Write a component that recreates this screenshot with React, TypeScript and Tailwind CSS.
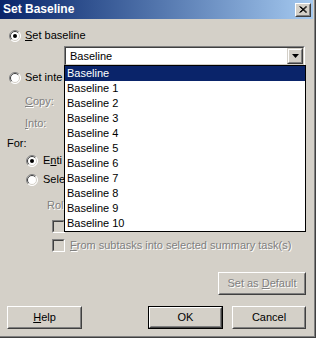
import React from "react";

const Radio = ({ checked }: { checked?: boolean }) => (
  <svg width="12" height="12" viewBox="0 0 12 12" className="shrink-0">
    <circle cx="6" cy="6" r="5.5" fill="#ffffff" />
    <path d="M2.1 9.9 A5.5 5.5 0 0 1 9.9 2.1" stroke="#808080" strokeWidth="1" fill="none" />
    <path d="M9.9 2.1 A5.5 5.5 0 0 1 2.1 9.9" stroke="#ffffff" strokeWidth="1" fill="none" />
    <path d="M2.8 9.2 A4.5 4.5 0 0 1 9.2 2.8" stroke="#404040" strokeWidth="1" fill="none" />
    <path d="M9.2 2.8 A4.5 4.5 0 0 1 2.8 9.2" stroke="#d4d0c8" strokeWidth="1" fill="none" />
    {checked && <circle cx="6" cy="6" r="2" fill="#000000" />}
  </svg>
);

const Check = () => (
  <div className="w-[13px] h-[13px] shrink-0 border border-t-[#808080] border-l-[#808080] border-r-white border-b-white">
    <div className="w-full h-full border border-t-[#404040] border-l-[#404040] border-r-[#d4d0c8] border-b-[#d4d0c8] bg-[#d4d0c8]" />
  </div>
);

const dis = "text-[#808080] [text-shadow:1px_1px_0_#ffffff]";

const Btn = ({
  children,
  w,
  def,
  disabled,
}: {
  children: React.ReactNode;
  w: string;
  def?: boolean;
  disabled?: boolean;
}) => (
  <div className={`${w} h-[23px] ${def ? "border border-black" : ""}`}>
    <div className="w-full h-full border border-t-white border-l-white border-r-[#404040] border-b-[#404040]">
      <div
        className={`w-full h-full border border-t-[#d4d0c8] border-l-[#d4d0c8] border-r-[#808080] border-b-[#808080] flex items-center justify-center ${
          disabled ? dis : "text-black"
        }`}
      >
        {children}
      </div>
    </div>
  </div>
);

const items = [
  "Baseline",
  "Baseline 1",
  "Baseline 2",
  "Baseline 3",
  "Baseline 4",
  "Baseline 5",
  "Baseline 6",
  "Baseline 7",
  "Baseline 8",
  "Baseline 9",
  "Baseline 10",
];

export default function App() {
  return (
    <div className="w-[316px] h-[338px] border-r border-b border-[#404040] font-['Liberation_Sans',Arial,sans-serif] text-[11px] leading-[13px] text-black">
      <div className="w-full h-full border-r border-b border-[#808080] bg-[#d4d0c8] flex flex-col relative">
        {/* Title bar */}
        <div className="h-[19px] mr-[1px] flex items-center justify-between bg-gradient-to-r from-[#0a246a] to-[#a6caf0]">
          <span className="pl-[3px] text-white font-bold text-[12px]">Set Baseline</span>
          <div className="mr-[2px] w-[16px] h-[14px] border border-t-white border-l-white border-r-[#404040] border-b-[#404040] bg-[#d4d0c8]">
            <div className="w-full h-full border border-t-[#d4d0c8] border-l-[#d4d0c8] border-r-[#808080] border-b-[#808080] flex items-center justify-center">
              <svg width="8" height="7" viewBox="0 0 8 7">
                <path d="M0.5 0.5 L7 6.5 M1.5 0.5 L8 6.5 M7 0.5 L0.5 6.5 M8 0.5 L1.5 6.5" stroke="#000" strokeWidth="1" />
              </svg>
            </div>
          </div>
        </div>

        {/* Set baseline */}
        <div className="mt-[10px] h-[13px] pl-[9px] flex items-center gap-[4px]">
          <Radio checked />
          <span>
            <span className="underline">S</span>et baseline
          </span>
        </div>

        {/* Combo */}
        <div className="mt-[4px] ml-[64px] w-[241px] h-[20px] relative">
          <div className="w-full h-full border border-t-[#808080] border-l-[#808080] border-r-white border-b-white">
            <div className="w-full h-full border border-t-[#404040] border-l-[#404040] border-r-[#d4d0c8] border-b-[#d4d0c8] bg-white flex items-center justify-between">
              <span className="pl-[4px]">Baseline</span>
              <div className="w-[16px] h-[16px] border border-t-[#d4d0c8] border-l-[#d4d0c8] border-r-[#404040] border-b-[#404040] bg-[#d4d0c8]">
                <div className="w-full h-full border border-t-white border-l-white border-r-[#808080] border-b-[#808080] flex items-center justify-center">
                  <svg width="7" height="4" viewBox="0 0 7 4">
                    <path d="M0 0 H7 L3.5 4 Z" fill="#000" />
                  </svg>
                </div>
              </div>
            </div>
          </div>
          {/* Dropdown list */}
          <div className="absolute left-0 top-[19px] w-[242px] border border-black bg-white z-10 flex flex-col">
            {items.map((it, i) => (
              <div
                key={it}
                className={`h-[15px] pl-[2px] flex items-center ${
                  i === 0 ? "bg-[#0a246a] text-white" : "text-black"
                }`}
              >
                {it}
              </div>
            ))}
          </div>
        </div>

        {/* Set interim plan (covered by list) */}
        <div className="mt-[5px] h-[13px] pl-[9px] flex items-center gap-[4px]">
          <Radio />
          <span>Set inte</span>
        </div>

        <div className={`mt-[11px] h-[13px] pl-[25px] flex items-center ${dis}`}>
          <span>
            <span className="underline">C</span>opy:
          </span>
        </div>
        <div className={`mt-[9px] h-[13px] pl-[25px] flex items-center ${dis}`}>
          <span>
            <span className="underline">I</span>nto:
          </span>
        </div>

        <div className="mt-[7px] h-[13px] pl-[7px] flex items-center">For:</div>

        <div className="mt-[4px] h-[13px] pl-[26px] flex items-center gap-[5px]">
          <Radio checked />
          <span>
            E<span className="underline">n</span>ti
          </span>
        </div>
        <div className="mt-[6px] h-[13px] pl-[26px] flex items-center gap-[5px]">
          <Radio />
          <span>Sele</span>
        </div>

        <div className={`mt-[13px] h-[13px] pl-[47px] flex items-center ${dis}`}>Rol</div>

        <div className="mt-[8px] h-[13px] pl-[52px] flex items-center gap-[5px]">
          <Check />
        </div>
        <div className="mt-[6px] h-[13px] pl-[52px] flex items-center gap-[5px]">
          <Check />
          <span className={dis}>
            <span className="underline">F</span>rom subtasks into selected summary task(s)
          </span>
        </div>

        <div className="mt-[20px] pl-[218px] flex">
          <Btn w="w-[88px]" disabled>
            <span>
              Set as <span className="underline">D</span>efault
            </span>
          </Btn>
        </div>

        <div className="mt-[11px] pl-[7px] flex">
          <Btn w="w-[75px]">
            <span>
              <span className="underline">H</span>elp
            </span>
          </Btn>
          <div className="ml-[66px]">
            <Btn w="w-[75px]" def>
              OK
            </Btn>
          </div>
          <div className="ml-[9px]">
            <Btn w="w-[74px]">Cancel</Btn>
          </div>
        </div>
      </div>
    </div>
  );
}
